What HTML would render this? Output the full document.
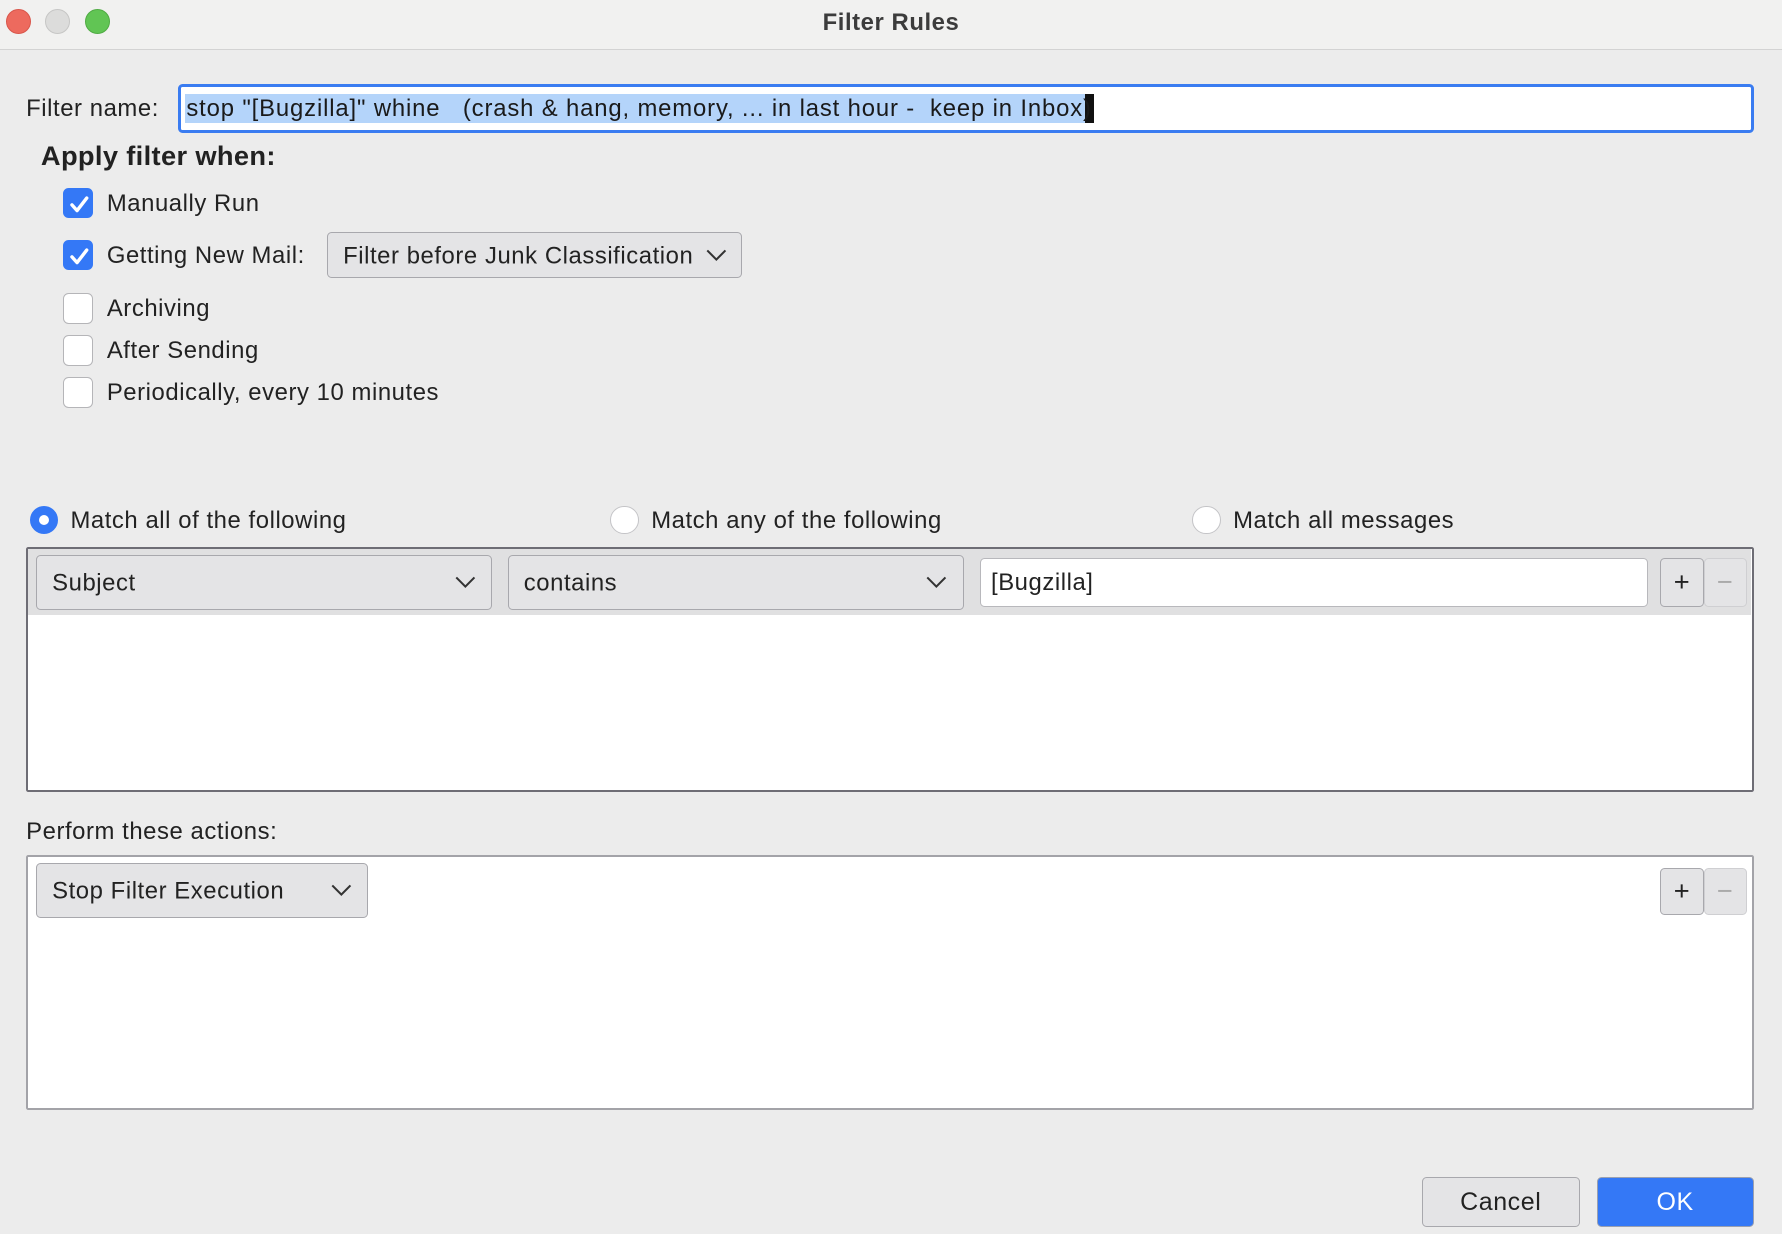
<!DOCTYPE html>
<html><head><meta charset="utf-8"><style>
*{box-sizing:border-box;margin:0;padding:0}
html,body{width:1782px;height:1234px;overflow:hidden;background:#ececec}
#w{position:relative;width:1568px;height:1086px;zoom:1.13648;font-family:"Liberation Sans",sans-serif;font-size:21px;color:#222;background:#ececec;letter-spacing:0.5px}
.a{position:absolute}
.t{position:absolute;line-height:26px;white-space:nowrap;margin-top:1px}
.cb{position:absolute;left:55px;width:27px;height:27px;border-radius:5px;background:#fff;border:1px solid #b5b5b8}
.cb.on{background:#3478f6;border-color:#3478f6}
.dd{position:absolute;background:#e4e4e6;border:1.5px solid #a8a8ad;border-radius:4px}
.dd span{position:absolute;left:13px;top:50%;transform:translateY(-45%);white-space:nowrap}
.dd svg{position:absolute;top:50%;transform:translateY(-50%)}
.rd{position:absolute;width:25px;height:25px;border-radius:50%;background:#fff;border:1px solid #c4c4c7}
.btn{position:absolute;border:1.5px solid #a8a8ad;border-radius:4px;background:#e4e4e6;text-align:center}
</style></head><body><div id="w">
<div class="a" style="left:0;top:0;width:1568px;height:44px;background:#f1f1f0;border-bottom:1px solid #d3d3d3"></div>
<div class="a" style="left:5px;top:8px;width:22px;height:22px;border-radius:50%;background:#ed6a5e;border:1px solid #d9564b"></div>
<div class="a" style="left:40px;top:8px;width:22px;height:22px;border-radius:50%;background:#dcdcdb;border:1px solid #c6c6c5"></div>
<div class="a" style="left:75px;top:8px;width:22px;height:22px;border-radius:50%;background:#61c554;border:1px solid #4fab43"></div>
<div class="t" style="left:0;width:1568px;text-align:center;top:6px;font-weight:bold;font-size:21px;color:#3c3c3c">Filter Rules</div>

<div class="t" style="left:23px;top:82px">Filter name:</div>
<div class="a" style="left:157px;top:74px;width:1386px;height:43px;border:3px solid #3a7cf1;border-radius:4px;background:#fff"></div>
<div class="a" style="left:163px;top:83px;width:792px;height:25px;background:#b4d4fa"></div>
<div class="a" style="left:955px;top:83px;width:8px;height:25px;background:#111"></div>
<div class="t" style="left:164px;top:82px;color:#1a1a1a;letter-spacing:0.75px">stop "[Bugzilla]" whine&nbsp;&nbsp; (crash &amp; hang, memory, ... in last hour -&nbsp; keep in Inbox)</div>

<div class="t" style="left:36px;top:123px;font-weight:bold;font-size:24px;letter-spacing:0.3px">Apply filter when:</div>

<div class="cb on" style="top:165px"><svg width="27" height="27" viewBox="0 0 27 27"><path d="M7 14 L11.5 19 L20 8" stroke="#fff" stroke-width="3" fill="none" stroke-linecap="round" stroke-linejoin="round"/></svg></div>
<div class="t" style="left:94px;top:165px">Manually Run</div>
<div class="cb on" style="top:211px"><svg width="27" height="27" viewBox="0 0 27 27"><path d="M7 14 L11.5 19 L20 8" stroke="#fff" stroke-width="3" fill="none" stroke-linecap="round" stroke-linejoin="round"/></svg></div>
<div class="t" style="left:94px;top:211px">Getting New Mail:</div>
<div class="dd" style="left:288px;top:204px;width:365px;height:41px"><span>Filter before Junk Classification</span><svg style="right:12px" width="20" height="12" viewBox="0 0 20 12"><path d="M2 2 L10 10 L18 2" stroke="#333" stroke-width="1.8" fill="none"/></svg></div>
<div class="cb" style="top:258px"></div><div class="t" style="left:94px;top:258px">Archiving</div>
<div class="cb" style="top:295px"></div><div class="t" style="left:94px;top:295px">After Sending</div>
<div class="cb" style="top:332px"></div><div class="t" style="left:94px;top:332px">Periodically, every 10 minutes</div>

<div class="rd" style="left:26px;top:445px;background:#3478f6;border-color:#3478f6"><div class="a" style="left:7px;top:7px;width:9px;height:9px;border-radius:50%;background:#fff"></div></div>
<div class="t" style="left:62px;top:444px">Match all of the following</div>
<div class="rd" style="left:537px;top:445px"></div>
<div class="t" style="left:573px;top:444px">Match any of the following</div>
<div class="rd" style="left:1049px;top:445px"></div>
<div class="t" style="left:1085px;top:444px">Match all messages</div>

<div class="a" style="left:23px;top:481px;width:1520px;height:216px;background:#fff;border:2px solid #6e6d75;border-radius:2px"></div>
<div class="a" style="left:25px;top:483px;width:1516px;height:58px;background:#e0e0e1"></div>
<div class="dd" style="left:32px;top:488px;width:401px;height:49px"><span>Subject</span><svg style="right:13px" width="20" height="12" viewBox="0 0 20 12"><path d="M2 2 L10 10 L18 2" stroke="#333" stroke-width="1.8" fill="none"/></svg></div>
<div class="dd" style="left:447px;top:488px;width:401px;height:49px"><span>contains</span><svg style="right:13px" width="20" height="12" viewBox="0 0 20 12"><path d="M2 2 L10 10 L18 2" stroke="#333" stroke-width="1.8" fill="none"/></svg></div>
<div class="a" style="left:862px;top:491px;width:588px;height:43px;background:#fff;border:1.5px solid #b8b8bc;border-radius:4px"></div>
<div class="t" style="left:872px;top:499px">[Bugzilla]</div>
<div class="btn" style="left:1461px;top:491px;width:38px;height:43px;line-height:40px;font-size:24px">+</div>
<div class="btn" style="left:1499px;top:491px;width:38px;height:43px;line-height:40px;font-size:24px;color:#aaa;border-color:#cfcfd2">−</div>

<div class="t" style="left:23px;top:718px">Perform these actions:</div>
<div class="a" style="left:23px;top:752px;width:1520px;height:225px;background:#fff;border:2px solid #a3a3a8;border-radius:2px"></div>
<div class="dd" style="left:32px;top:759px;width:292px;height:49px"><span>Stop Filter Execution</span><svg style="right:13px" width="20" height="12" viewBox="0 0 20 12"><path d="M2 2 L10 10 L18 2" stroke="#333" stroke-width="1.8" fill="none"/></svg></div>
<div class="btn" style="left:1461px;top:764px;width:38px;height:41px;line-height:38px;font-size:24px">+</div>
<div class="btn" style="left:1499px;top:764px;width:38px;height:41px;line-height:38px;font-size:24px;color:#aaa;border-color:#cfcfd2">−</div>

<div class="btn" style="left:1251px;top:1036px;width:139px;height:44px;line-height:43px;font-size:22px">Cancel</div>
<div class="btn" style="left:1405px;top:1036px;width:138px;height:44px;line-height:43px;font-size:22px;background:#3478f6;border-color:#9aa0b0;color:#fff">OK</div>
</div></body></html>
